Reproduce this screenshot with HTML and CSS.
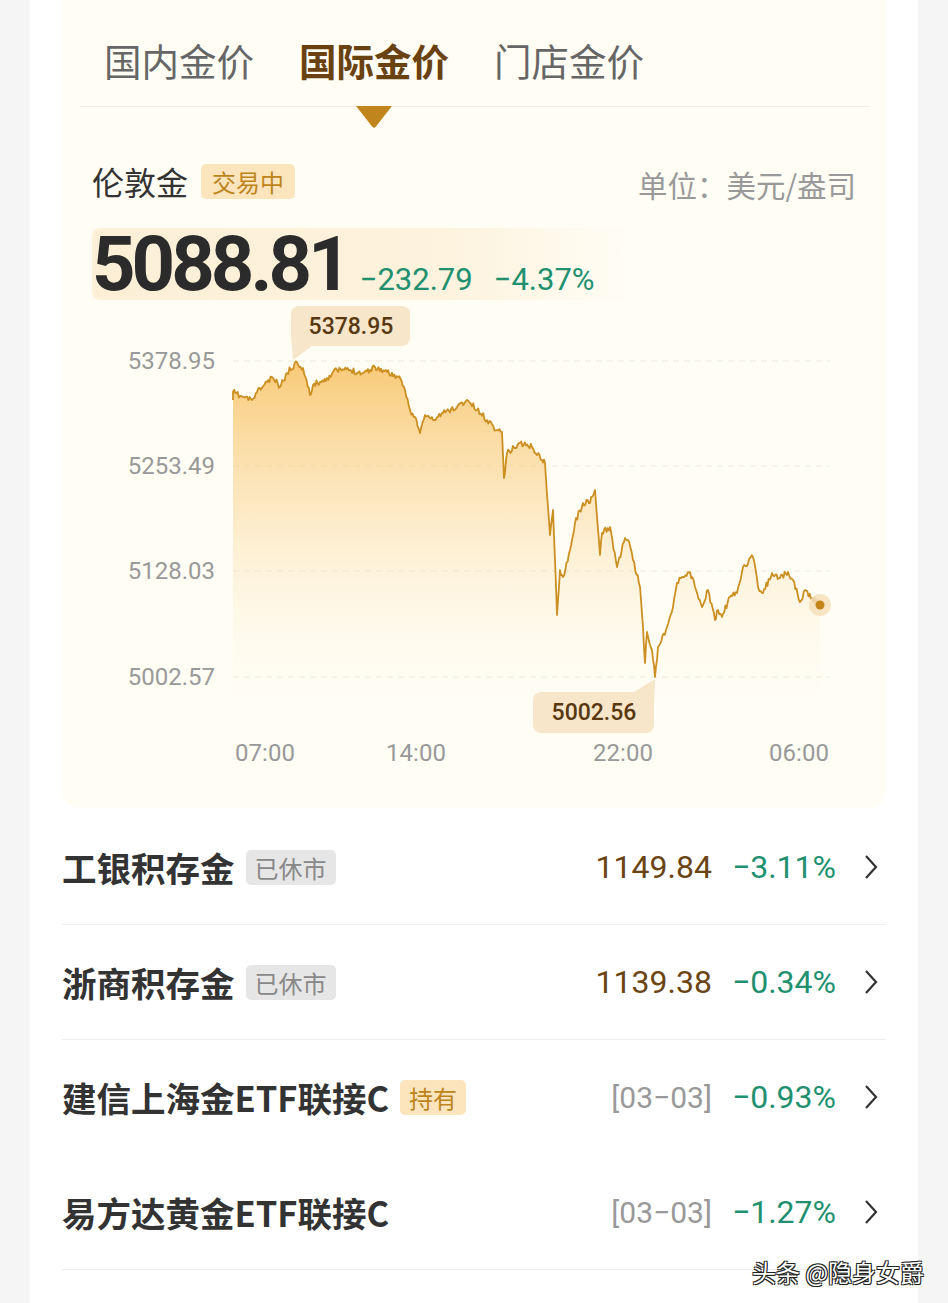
FILE: index.html
```html
<!DOCTYPE html>
<html lang="zh-CN">
<head>
    <meta charset="UTF-8">
    <title>国际金价</title>
    <link rel="stylesheet" href="styles.css">
</head>
<body>
<div class="page">
    <div class="panel">
        <div class="tabs">
            <div class="tab">国内金价</div>
            <div class="tab active">国际金价</div>
            <div class="tab">门店金价</div>
        </div>

        <div class="head">
            <span class="title">伦敦金</span>
            <span class="badge gold">交易中</span>
            <span class="unit">单位：美元/盎司</span>
        </div>

        <div class="price-row">
            <span class="price num">5088.81</span>
            <span class="change num">−232.79</span>
            <span class="change num">−4.37%</span>
        </div>

        <svg class="chart" width="824" height="490" viewBox="62 300 824 490">
            <defs>
                <linearGradient id="fill" x1="0" y1="360" x2="0" y2="700" gradientUnits="userSpaceOnUse">
                    <stop offset="0" stop-color="#f8c060" stop-opacity="0.85"/>
                    <stop offset="0.45" stop-color="#fad696" stop-opacity="0.5"/>
                    <stop offset="1" stop-color="#fff6e2" stop-opacity="0"/>
                </linearGradient>
            </defs>

            <g class="grid">
                <line x1="233" y1="361" x2="830" y2="361"/>
                <line x1="233" y1="466" x2="830" y2="466"/>
                <line x1="233" y1="571" x2="830" y2="571"/>
                <line x1="233" y1="677" x2="830" y2="677"/>
            </g>

            <g class="axis">
                <text x="215" y="369" text-anchor="end">5378.95</text>
                <text x="215" y="474" text-anchor="end">5253.49</text>
                <text x="215" y="579" text-anchor="end">5128.03</text>
                <text x="215" y="685" text-anchor="end">5002.57</text>
                <text x="265" y="761" text-anchor="middle">07:00</text>
                <text x="416" y="761" text-anchor="middle">14:00</text>
                <text x="623" y="761" text-anchor="middle">22:00</text>
                <text x="799" y="761" text-anchor="middle">06:00</text>
            </g>

            <path id="area" fill="url(#fill)" stroke="none"/>
            <path id="line" fill="none" stroke="#cc8f22" stroke-width="1.8" stroke-linejoin="round"/>

            <circle cx="820" cy="605" r="11" fill="#f4dfba" opacity="0.85"/>
            <circle cx="820" cy="605" r="4.5" fill="#c4841c"/>

            <g class="tip">
                <rect x="291" y="306" width="119" height="40" rx="8"/>
                <polygon points="291,334 312,346 293,360"/>
                <text x="351" y="334" text-anchor="middle">5378.95</text>
            </g>
            <g class="tip">
                <rect x="533" y="692" width="121" height="41" rx="8"/>
                <polygon points="654,704 634,692 655,679"/>
                <text x="594" y="720" text-anchor="middle">5002.56</text>
            </g>
        </svg>
    </div>

    <div class="list">
        <div class="row">
            <span class="name">工银积存金</span>
            <span class="badge gray">已休市</span>
            <span class="right">
                <span class="val num">1149.84</span>
                <span class="pct num">−3.11%</span>
            </span>
            <svg class="chev" width="14" height="26" viewBox="0 0 14 26"><path d="M2 2 L12 13 L2 24"/></svg>
        </div>
        <div class="row">
            <span class="name">浙商积存金</span>
            <span class="badge gray">已休市</span>
            <span class="right">
                <span class="val num">1139.38</span>
                <span class="pct num">−0.34%</span>
            </span>
            <svg class="chev" width="14" height="26" viewBox="0 0 14 26"><path d="M2 2 L12 13 L2 24"/></svg>
        </div>
        <div class="row no-line">
            <span class="name">建信上海金ETF联接C</span>
            <span class="badge gold">持有</span>
            <span class="right">
                <span class="date num">[03−03]</span>
                <span class="pct num">−0.93%</span>
            </span>
            <svg class="chev" width="14" height="26" viewBox="0 0 14 26"><path d="M2 2 L12 13 L2 24"/></svg>
        </div>
        <div class="row">
            <span class="name">易方达黄金ETF联接C</span>
            <span class="right">
                <span class="date num">[03−03]</span>
                <span class="pct num">−1.27%</span>
            </span>
            <svg class="chev" width="14" height="26" viewBox="0 0 14 26"><path d="M2 2 L12 13 L2 24"/></svg>
        </div>
    </div>
</div>

<div class="mark">头条 @隐身女爵</div>

<script>
    // rough intraday ticks: key points from the day, filled in with small noise
    var keys = [
        [233,400],[233,392],[240,396],[252,400],[257,392],[267,382],[273,378],[280,387],[287,373],[297,362],
        [303,368],[310,395],[313,385],[327,378],[337,370],[350,370],[363,373],[375,367],[387,372],[398,377],
        [405,390],[410,410],[415,417],[420,433],[425,415],[433,420],[443,413],[457,407],[467,400],[477,410],
        [487,420],[497,430],[502,432],[504,478],[507,453],[520,443],[532,447],[542,460],[545,463],[548,507],
        [550,535],[553,510],[557,615],[560,570],[563,577],[570,550],[575,523],[583,503],[590,503],[595,490],
        [597,517],[600,555],[602,533],[610,527],[617,567],[625,538],[628,540],[633,560],[640,587],[643,627],
        [645,663],[647,632],[652,650],[655,677],[658,647],[667,627],[673,607],[677,583],[682,577],[690,572],
        [695,587],[702,607],[708,590],[715,620],[718,610],[722,617],[730,597],[737,593],[743,567],[753,557],
        [758,587],[763,593],[772,573],[780,578],[788,572],[793,580],[800,602],[805,590],[812,598],[820,605]
    ];
    var seed = 11;
    function rnd() {
        seed = (seed * 16807) % 2147483647;
        return seed / 2147483647;
    }
    var d = "M" + keys[0][0] + " " + keys[0][1];
    for (var i = 1; i < keys.length; i++) {
        var a = keys[i - 1], b = keys[i];
        var steps = Math.max(1, Math.round((b[0] - a[0]) / 1.2));
        for (var s = 1; s <= steps; s++) {
            var t = s / steps;
            var x = a[0] + (b[0] - a[0]) * t;
            var y = a[1] + (b[1] - a[1]) * t;
            if (s < steps) y += (rnd() - 0.5) * 6;
            d += " L" + x.toFixed(1) + " " + y.toFixed(1);
        }
    }
    document.getElementById("line").setAttribute("d", d);
    document.getElementById("area").setAttribute("d", d + " L820 700 L233 700 Z");
</script>
</body>
</html>
```

FILE: styles.css
```css
body {
    margin: 0;
    background-color: #f5f5f5;
    font-family: "Noto Sans CJK SC", sans-serif;
    color: #333;
}
.page {
    width: 888px;
    min-height: 1303px;
    margin-left: 30px;
    background-color: #fff;
    overflow: hidden;
}
.num {
    font-family: Roboto, "Noto Sans CJK SC", sans-serif;
}

/* chart card */
.panel {
    margin: 0 32px;
    padding-bottom: 18px;
    background-color: #fffdf4;
    border-radius: 0 0 18px 18px;
}
.tabs {
    display: flex;
    gap: 45px;
    height: 92px;
    margin: 0 16px 0 18px;
    padding: 14px 0 0 24px;
    border-bottom: 1px solid #f4efe0;
}
.tab {
    position: relative;
    height: 92px;
    line-height: 92px;
    font-size: 37.5px;
    color: #666;
}
.tab.active {
    color: #6a4212;
    font-weight: 700;
}
.tab.active::after {
    content: "";
    position: absolute;
    top: 100%;
    left: 50%;
    width: 36px;
    height: 22px;
    margin-left: -18px;
    background-color: #c0861d;
    clip-path: polygon(0 0, 100% 0, 56% 92%, 50% 100%, 44% 92%);
}
.head {
    display: flex;
    align-items: center;
    height: 40px;
    margin-top: 54px;
    padding: 0 30px;
}
.title {
    font-size: 32px;
    color: #333;
}
.unit {
    margin-left: auto;
    margin-top: 6px;
    font-size: 29.5px;
    color: #999;
}
.badge {
    display: inline-block;
    height: 35px;
    line-height: 35px;
    padding: 0 11px;
    margin-left: 13px;
    font-size: 24px;
    border-radius: 5px;
}
.badge.gold {
    background-color: #fce5bd;
    color: #bd841c;
}
.badge.gray {
    background-color: #e6e6e6;
    color: #888;
}
.row .badge {
    padding: 0 9px;
    margin-left: 11px;
}
.price-row {
    display: flex;
    align-items: baseline;
    height: 72px;
    margin: 27px 30px 0 30px;
    border-radius: 8px;
    background: linear-gradient(90deg, #fcefd6 0%, #fdf2dd 45%, rgba(255, 253, 244, 0) 70%);
}
.price {
    font-size: 76px;
    font-weight: 700;
    letter-spacing: -4px;
    line-height: 72px;
    color: #2b2b2b;
    margin-right: 12px;
}
.change {
    font-size: 31px;
    color: #21906f;
    margin-right: 21px;
}
.chart {
    display: block;
}
.grid line {
    stroke: #efe9da;
    stroke-width: 1;
    stroke-dasharray: 6 5;
}
.axis text {
    font-family: Roboto, sans-serif;
    font-size: 24px;
    fill: #999;
}
.tip rect,
.tip polygon {
    fill: #f7e6c9;
}
.tip text {
    font-family: Roboto, sans-serif;
    font-size: 23px;
    font-weight: 500;
    fill: #573810;
}

/* product list */
.list {
    margin: 2px 32px 0 32px;
}
.row {
    display: flex;
    align-items: center;
    height: 114px;
    border-bottom: 1px solid #eee;
    padding-right: 8px;
}
.row.no-line {
    border-bottom-color: transparent;
}
.name {
    font-size: 34.5px;
    font-weight: 700;
    color: #333;
}
.right {
    display: flex;
    align-items: baseline;
    gap: 20px;
    margin-left: auto;
}
.val {
    font-size: 32px;
    color: #6b4413;
}
.pct {
    font-size: 32px;
    color: #21906f;
}
.date {
    font-size: 30px;
    color: #999;
}
.chev {
    margin-left: 28px;
}
.chev path {
    fill: none;
    stroke: #333;
    stroke-width: 2.2;
}
.mark {
    position: absolute;
    left: 752px;
    top: 1254px;
    font-size: 24px;
    color: #fff;
    white-space: nowrap;
    text-shadow: -1px -1px 0 #222, 1px -1px 0 #222, -1px 1px 0 #222, 1px 1px 0 #222;
}
```
